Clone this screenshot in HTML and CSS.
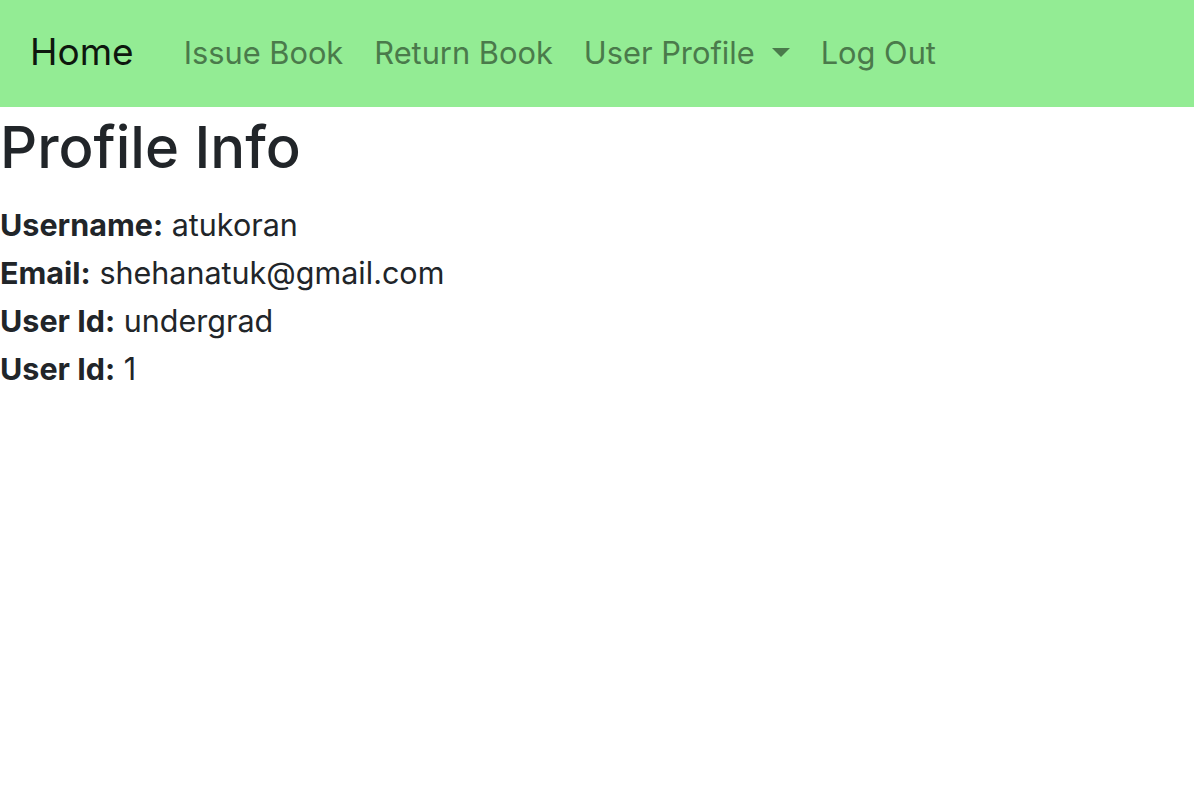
FILE: index.html
```html
<!DOCTYPE html>
<html lang="en">
<head>
<meta charset="utf-8">
<title>Profile Info</title>
<link rel="stylesheet" href="styles.css">
</head>
<body>
<nav class="navbar">
  <a class="brand" href="#">Home</a>
  <ul class="nav">
    <li><a class="nav-link" href="#">Issue Book</a></li>
    <li><a class="nav-link" href="#">Return Book</a></li>
    <li><a class="nav-link dropdown" href="#">User Profile<span class="caret"></span></a></li>
    <li><a class="nav-link" href="#">Log Out</a></li>
  </ul>
</nav>
<main class="content">
  <h1 class="title">Profile Info</h1>
  <div class="info">
    <div class="row"><strong>Username:</strong> atukoran</div>
    <div class="row"><strong>Email:</strong> shehanatuk@gmail.com</div>
    <div class="row"><strong>User Id:</strong> undergrad</div>
    <div class="row"><strong>User Id:</strong> 1</div>
  </div>
</main>
</body>
</html>
```
FILE: styles.css
```css
* { box-sizing: border-box; }
html, body { margin: 0; padding: 0; }
body {
  font-family: Inter, "Noto Sans", "Liberation Sans", sans-serif;
  color: #212529;
  background: #fff;
}
.navbar {
  display: flex;
  align-items: center;
  height: 107px;
  background: #93ec94;
  padding-left: 30px;
  padding-bottom: 3px;
}
.brand {
  font-size: 37px;
  color: #0e170e;
  text-decoration: none;
  margin-right: 35px;
  line-height: 1.5;
}
.nav {
  display: flex;
  list-style: none;
  margin: 0;
  padding: 0;
  gap: 1px;
}
.nav-link {
  display: flex;
  align-items: center;
  font-size: 30.8px;
  line-height: 45px;
  padding: 0 15px;
  color: #4a7a4b;
  text-decoration: none;
}
.caret {
  display: inline-block;
  width: 0;
  height: 0;
  margin-left: 17px;
  border-top: 9px solid #4a7a4b;
  border-left: 9.5px solid transparent;
  border-right: 9.5px solid transparent;
}
.content { padding: 0; }
.title {
  font-size: 58px;
  font-weight: 500;
  line-height: 1.2;
  margin: 6px 0 18px;
}
.info { font-size: 30.5px; line-height: 48px; }
.row strong { font-weight: 700; }
```
